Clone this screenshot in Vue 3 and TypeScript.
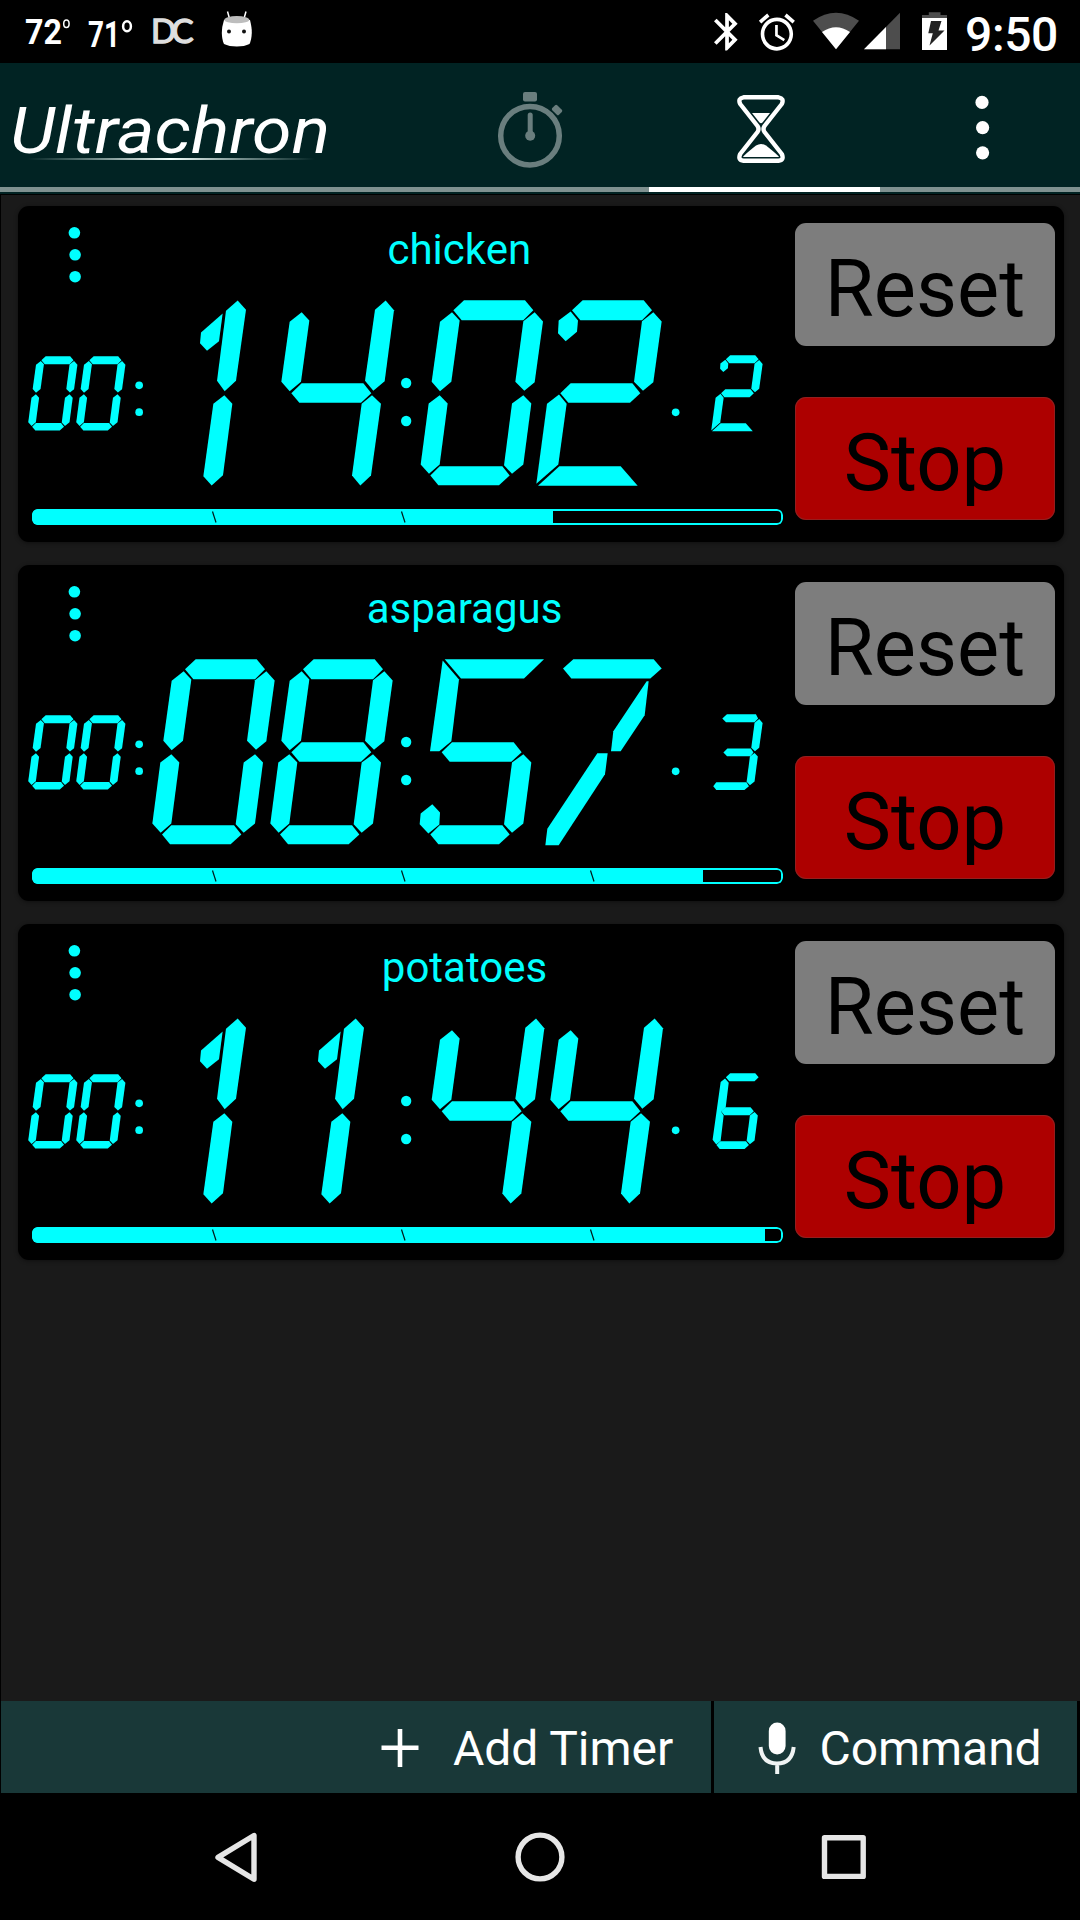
<script setup lang="ts">
interface Timer {
  name: string
  hours: string
  minutes: string
  seconds: string
  tenths: string
  progress: number
  ticks: number[]
}

interface PlacedDigit {
  shapes: string[]
  transform: string
}

const timers: Timer[] = [
  { name: 'chicken\u00a0', hours: '00', minutes: '14', seconds: '02', tenths: '2', progress: 521.3, ticks: [180, 369] },
  { name: 'asparagus', hours: '00', minutes: '08', seconds: '57', tenths: '3', progress: 670.5, ticks: [180, 369, 558] },
  { name: 'potatoes', hours: '00', minutes: '11', seconds: '44', tenths: '6', progress: 733.3, ticks: [180, 369, 558] },
]

// LCD segments, named in the usual a-g order
const a = '555,327 587,297 770,297 795,327 765,357 580,357'
const b = '799,333 824,361 799,543 768,569 741,542 765,360'
const c = '765,582 789,607 765,790 731,818 707,792 731,607'
const d = '486,823 514,795 702,795 724,823 692,852 510,852'
const e = '514,582 538,607 514,790 482,818 457,790 481,607'
const f = '551,333 574,358 549,542 515,570 490,542 515,362'
const g = '520,576 551,546 736,546 760,576 729,605 544,605'

const glyphs: Record<string, string[]> = {
  '0': [a, b, c, d, e, f],
  '1': [
    '668,337 657,420 621,449 600,426 603,394',
    '713,298 738,326 708,539 674,570 651,539 678,329',
    '673,582 697,608 669,822 635,853 610,825 640,608',
  ],
  '2': [
    a, b, g,
    '551,331 573,358 570,392 536,420 513,396 515,358',
    '516,580 539,608 514,790 448,848 480,608',
    '453,854 517,795 701,795 752,854',
  ],
  '3': [
    '529,328 563,297 775,297 791,328 765,357 556,357',
    b, c,
    '537,577 566,548 738,548 757,577 735,605 564,605',
    '463,824 485,796 706,796 724,824 691,852 485,852',
  ],
  '4': [
    f, g,
    '803,298 828,327 800,540 766,569 741,539 771,326',
    '762,582 789,608 759,823 727,853 702,823 731,608',
  ],
  '5': [
    '529,297 827,297 767,355 578,355',
    '523,301 572,358 549,543 513,573 485,573',
    g, c, d,
    '492,732 515,757 513,793 480,820 454,792 457,760',
  ],
  '6': [
    a, g, c, d,
    '549,336 576,368 554,546 520,577 539,607 517,792 485,819 458,785 517,361',
  ],
  '7': [
    '528,325 559,297 800,297 824,325 790,355 553,355',
    '785,363 773,465 701,573 672,573 679,513 779,363',
    '631,579 662,579 654,642 515,855 475,855 481,806',
  ],
  '8': [a, b, c, d, e, f, g],
}

function place(digit: string, x: number, y: number, scale = 1): PlacedDigit {
  return { shapes: glyphs[digit], transform: `translate(${x} ${y}) scale(${scale})` }
}

function digitsOf(t: Timer): PlacedDigit[] {
  return [
    place(t.hours[0], -99, 345.6, 0.402),
    place(t.hours[1], 45, 345.6, 0.402),
    place(t.minutes[0], 0, 0),
    place(t.minutes[1], 354, 0),
    place(t.seconds[0], 805, 0),
    place(t.seconds[1], 1161, 0),
    place(t.tenths, 1950, 340.2, 0.41),
  ]
}

const rows = timers.map((t) => ({
  ...t,
  digits: digitsOf(t),
  label: `${t.hours}:${t.minutes}:${t.seconds}.${t.tenths}`,
}))
</script>

<template>
  <div class="screen">
    <header class="status">
      <svg class="status-left" width="300" height="63" viewBox="0 0 300 63">
        <g fill="#fff" font-family="Roboto, sans-serif" font-weight="700">
          <text x="25" y="44" font-size="35" textLength="37" lengthAdjust="spacingAndGlyphs">72</text>
          <text x="88" y="46.500" font-size="36" textLength="32" lengthAdjust="spacingAndGlyphs">71</text>
        </g>
        <g fill="none" stroke="#fff">
          <ellipse cx="66.400" cy="23.700" rx="2.700" ry="3.800" stroke-width="1.500" />
          <ellipse cx="127" cy="26.300" rx="3.900" ry="5" stroke-width="2.500" />
        </g>
        <text x="151" y="42.500" fill="#dedede" stroke="#dedede" stroke-width="1.400" font-family="Lato, sans-serif" font-size="33" letter-spacing="-4.500">DC</text>
        <path d="M227.500 11.500l2 7M246 11.500l-2 7" stroke="#fff" stroke-width="1.500" />
        <path d="M224 20h26q2 8 1.800 13-.3 7-2.300 11-5 2.500-12.700 2.500T224 44q-2-4-2.200-11-.1-6 2.200-13z" fill="#fff" />
        <ellipse cx="236.800" cy="19.700" rx="12.500" ry="3.600" fill="#bdbdbd" />
        <circle cx="229" cy="31.500" r="2" fill="#111" />
        <circle cx="244" cy="31.500" r="2" fill="#111" />
      </svg>
      <svg class="status-right" width="255" height="63" viewBox="700 0 255 63">
        <path transform="translate(704.700 9.300) scale(1.860 1.870)" fill="#fff" d="M17.710 7.710L12 2h-1v7.590L6.410 5 5 6.410 10.590 12 5 17.590 6.410 19 11 14.410V22h1l5.710-5.710-4.300-4.290 4.300-4.290zM13 5.830l1.880 1.880L13 9.590V5.830zm1.880 10.460L13 18.170v-3.760l1.880 1.880z" />
        <path transform="translate(755.300 10.200) scale(1.800 1.840)" fill="#fff" d="M22 5.720l-4.600-3.860-1.290 1.530 4.600 3.860L22 5.720zM7.880 3.390L6.600 1.860 2 5.710l1.290 1.530 4.590-3.850zM12.500 8H11v6l4.750 2.850.75-1.230-4-2.370V8zM12 4c-4.970 0-9 4.030-9 9s4.020 9 9 9c4.970 0 9-4.030 9-9s-4.030-9-9-9zm0 16c-3.870 0-7-3.130-7-7s3.130-7 7-7 7 3.130 7 7-3.130 7-7 7z" />
        <path d="M836 49.300L813 20.700Q836 4.700 859 20.700z" fill="#4d4d4d" />
        <path d="M836 49.300L822 32Q836 22.500 850 32z" fill="#fff" />
        <path d="M864 49.300L900 12.700V49.300z" fill="#4d4d4d" />
        <path d="M864 49.300L886 27V49.300z" fill="#fff" />
        <path d="M922 18v-3h6.800v-2.700h11.700V15H947v3z" fill="#4d4d4d" />
        <path d="M922 18h25v32h-25z" fill="#fff" />
        <path d="M931 21h10.500l-3 9.500h6L929.500 45.500l3.300-12.300h-4.500z" fill="#222" />
      </svg>
      <span class="clock">9:50</span>
    </header>

    <nav class="appbar">
      <svg width="1080" height="132" viewBox="0 63 1080 132">
        <defs>
          <linearGradient id="glow">
            <stop offset="0" stop-color="#d9efea" stop-opacity="0" />
            <stop offset=".5" stop-color="#f4fffc" />
            <stop offset="1" stop-color="#d9efea" stop-opacity="0" />
          </linearGradient>
        </defs>
        <text x="10" y="152.500" fill="#fff" font-family="Roboto, sans-serif" font-style="italic" font-size="64" textLength="320" lengthAdjust="spacingAndGlyphs">Ultrachron</text>
        <rect x="27" y="158" width="288" height="2" fill="url(#glow)" />

        <g fill="none" stroke="#6a7e7e">
          <circle cx="530" cy="135.700" r="29.300" stroke-width="5.500" />
          <path d="M530.200 115v20" stroke-width="5" stroke-linecap="round" />
        </g>
        <g fill="#6a7e7e">
          <circle cx="530.200" cy="135.700" r="5" />
          <rect x="523" y="92" width="14" height="9.500" rx="2" />
          <rect x="552.300" y="106.500" width="9.500" height="7" rx="1.500" transform="rotate(45 557 110)" />
        </g>

        <g stroke="#fff" stroke-width="4.400" stroke-linejoin="round" fill="none">
          <path d="M743.500 97.300H778.500Q784.500 98.500 781.800 104L764.500 126Q762.500 129 764.500 132L781.800 154Q784.500 160 778.500 160.700H743.500Q737.500 160 740.200 154L757.500 132Q759.500 129 757.500 126L740.200 104Q737.500 98.500 743.500 97.300z" />
        </g>
        <path d="M752 113H770L762.500 122.500Q761 124 759.500 122.500z" fill="#fff" />
        <path d="M743 157Q744 155 756 145.500Q761 142.500 766 145.500Q778 155 779 157z" fill="#fff" />

        <g fill="#fff">
          <circle cx="982" cy="102.400" r="6.600" />
          <circle cx="982.600" cy="127.600" r="6.600" />
          <circle cx="982.600" cy="152.800" r="6.600" />
        </g>
        <rect x="0" y="187" width="1080" height="5" fill="#7f9190" />
        <rect x="649" y="187" width="231" height="5" fill="#fff" />
        <rect x="0" y="194" width="1080" height="1" fill="#000" />
      </svg>
    </nav>

    <main class="list">
      <section v-for="row in rows" :key="row.name" class="card">
        <div class="panel">
          <div class="heading">
            <svg class="more" width="111" height="85" viewBox="0 0 111 85">
              <g fill="#0ff">
                <circle cx="56.400" cy="26.800" r="5.800" />
                <circle cx="57.100" cy="48.800" r="5.800" />
                <circle cx="57.100" cy="70.700" r="5.800" />
              </g>
            </svg>
            <h2 class="name">{{ row.name }}</h2>
          </div>
          <svg class="readout" width="769" height="200" viewBox="54 269.500 2307 600" role="img" :aria-label="row.label">
            <g fill="#0ff">
              <g v-for="(digit, i) in row.digits" :key="i" :transform="digit.transform">
                <polygon v-for="points in digit.shapes" :key="points" :points="points" />
              </g>
              <circle cx="417.500" cy="552.500" r="11.500" />
              <circle cx="417.500" cy="633" r="11.500" />
              <circle cx="1218.500" cy="545.500" r="15.500" />
              <circle cx="1218.500" cy="659.500" r="15.500" />
              <circle cx="2027" cy="633.500" r="11.500" />
            </g>
          </svg>
          <div class="bar">
            <div class="fill" :style="{ width: row.progress + 'px' }"></div>
            <svg class="ticks" width="751" height="16" viewBox="0 0 751 16">
              <path v-for="x in row.ticks" :key="x" :d="`M${x + 0.5} 2.500l3.500 11`" stroke="#001a1a" stroke-width="1.200" />
            </svg>
          </div>
        </div>
        <div class="actions">
          <button class="btn reset">Reset</button>
          <button class="btn stop">Stop</button>
        </div>
      </section>
    </main>

    <footer class="tools">
      <button class="tool add">
        <svg width="38" height="92" viewBox="380.500 1701 38 92">
          <path d="M399.500 1729v38M381 1747.800h37" stroke="#fff" stroke-width="4.600" />
        </svg>
        <span>Add Timer</span>
      </button>
      <button class="tool command">
        <svg width="38" height="92" viewBox="758 1701 38 92">
          <rect x="768.800" y="1722.500" width="16.800" height="32" rx="8.400" fill="#fff" />
          <path d="M760.500 1747Q762 1763.500 777 1763.500T793.700 1747M777.200 1763v11" fill="none" stroke="#f0f4f4" stroke-width="4" />
        </svg>
        <span>Command</span>
      </button>
    </footer>

    <nav class="system">
      <svg width="1080" height="127" viewBox="0 1793 1080 127">
        <g fill="none" stroke="#e6e6e6" stroke-width="5.400" stroke-linejoin="round">
          <path d="M218 1857.400L254 1835.500V1879.300z" />
          <circle cx="540" cy="1857" r="21.900" />
          <rect x="824.500" y="1837.700" width="38.700" height="38.700" />
        </g>
      </svg>
    </nav>
  </div>
</template>

<style>
body {
  margin: 0;
  background: #000;
}
</style>

<style scoped>
.screen {
  width: 1080px;
  height: 1920px;
  display: flex;
  flex-direction: column;
  overflow: hidden;
  background: #000;
  font-family: Roboto, sans-serif;
}

svg {
  display: block;
  flex: none;
}

button {
  border: 0;
  margin: 0;
  padding: 0;
  font-family: inherit;
}

.status {
  height: 63px;
  display: flex;
  color: #fff;
}

.status-right {
  margin-left: 400px;
}

.clock {
  width: 115px;
  margin-left: 10px;
  font-size: 48px;
  font-weight: 500;
  line-height: 69px;
  letter-spacing: -0.400px;
  white-space: nowrap;
}

.appbar {
  height: 132px;
  background: #012323;
}

.list {
  flex: 1;
  box-sizing: border-box;
  margin-left: 1px;
  padding: 11px 16px 0 16.500px;
  display: flex;
  flex-direction: column;
  gap: 23px;
  background: #1a1a1a;
}

.card {
  box-sizing: border-box;
  height: 336px;
  display: flex;
  padding-left: 0.500px;
  padding-right: 9px;
  border-radius: 11px;
  background: #000;
  box-shadow: 0 1px 4px rgba(0, 0, 0, 0.45);
}

.panel {
  width: 771px;
  flex: none;
}

.heading {
  height: 85px;
  display: flex;
}

.name {
  flex: 1;
  margin: 0;
  padding-left: 11px;
  color: #0ff;
  font-size: 42px;
  font-weight: 400;
  line-height: 88px;
  text-align: center;
}

.bar {
  position: relative;
  box-sizing: border-box;
  width: 751px;
  height: 16px;
  margin: 18px 0 0 14px;
  border-radius: 6px;
  overflow: hidden;
}

.bar::after {
  content: '';
  position: absolute;
  inset: 0;
  border: 2px solid #0ff;
  border-radius: 6px;
}

.fill {
  height: 16px;
  background: #0ff;
}

.ticks {
  position: absolute;
  left: 0;
  top: 0;
}

.actions {
  flex: 1;
  margin-left: 6px;
  padding-top: 17px;
  display: flex;
  flex-direction: column;
  gap: 51px;
}

.btn {
  box-sizing: border-box;
  height: 123px;
  padding-top: 9px;
  border-radius: 11px;
  color: #000;
  font-size: 79.500px;
  line-height: 114px;
}

.reset {
  background: #7d7d7d;
}

.stop {
  background: #ad0000;
  box-shadow: inset 0 0 0 1px rgba(125, 60, 60, 0.5);
}

.tools {
  height: 92px;
  padding: 0 3px 0 1px;
  display: flex;
  gap: 3px;
}

.tool {
  display: flex;
  height: 92px;
  background: #193838;
  color: #fff;
  font-size: 48px;
  line-height: 96px;
  white-space: nowrap;
}

.add {
  width: 709.500px;
  padding-left: 380px;
  gap: 34px;
}

.command {
  flex: 1;
  padding-left: 44px;
  gap: 24px;
}

.tool span {
  letter-spacing: -0.050px;
}

.system {
  height: 127px;
}
</style>
